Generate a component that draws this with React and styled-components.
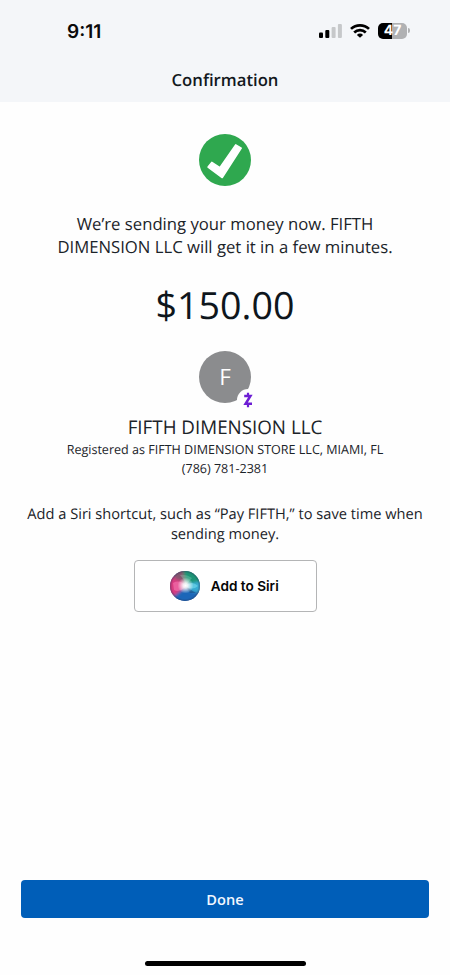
import React from 'react';
import styled, { createGlobalStyle } from 'styled-components';

const GlobalStyle = createGlobalStyle`
  * {
    box-sizing: border-box;
  }

  body {
    margin: 0;
    background: #fefefe;
    font-family: 'Open Sans', 'Noto Sans', sans-serif;
    color: #1b2329;
    text-rendering: geometricPrecision;
  }

  button {
    font-family: inherit;
    cursor: pointer;
  }
`;

const Screen = styled.div`
  width: 450px;
  height: 975px;
  display: flex;
  flex-direction: column;
  background: #fefefe;
  overflow: hidden;
`;

const Header = styled.header`
  height: 102px;
  flex-shrink: 0;
  background: #f4f6f9;
`;

const StatusBar = styled.div`
  height: 61px;
  padding: 0 39px 0 67px;
  display: flex;
  align-items: center;
  justify-content: space-between;
`;

const Time = styled.div`
  padding-top: 1px;
  font-family: Inter, sans-serif;
  font-size: 19px;
  font-weight: 600;
  color: #0a0a0a;
`;

const StatusIcons = styled.div`
  display: flex;
  align-items: center;
  gap: 8px;
`;

const Battery = styled.div`
  position: relative;
  width: 29px;
  height: 16px;
  margin-right: 4px;
  display: flex;
  align-items: center;
  justify-content: center;
  border-radius: 5px;
  background: linear-gradient(90deg, #000 48%, #b0b1b3 48%);
  color: #fff;
  font-family: Inter, sans-serif;
  font-size: 14px;
  font-weight: 700;
  line-height: 17px;

  &::after {
    content: '';
    position: absolute;
    right: -3px;
    top: 5.5px;
    width: 2px;
    height: 5px;
    border-radius: 0 2px 2px 0;
    background: #b0b1b3;
  }
`;

const Title = styled.h1`
  margin: 7px 0 0;
  text-align: center;
  font-size: 16.7px;
  font-weight: 600;
  line-height: 23px;
  color: #12181d;
`;

const Content = styled.main`
  flex: 1;
  display: flex;
  flex-direction: column;
  align-items: center;
  padding-top: 32px;
  text-align: center;
`;

const Message = styled.p`
  width: 360px;
  margin: 27px 0 0;
  font-size: 16.7px;
  line-height: 22.5px;
`;

const Amount = styled.div`
  margin-top: 21px;
  font-size: 37.6px;
  line-height: 54px;
  color: #0e161c;
`;

const Avatar = styled.div`
  position: relative;
  width: 52px;
  height: 52px;
  margin-top: 18px;
  display: flex;
  align-items: center;
  justify-content: center;
  border-radius: 50%;
  background: #8b8c8e;
  color: #fff;
  font-size: 22.5px;
  line-height: 52px;
`;

const Badge = styled.span`
  position: absolute;
  left: 38px;
  top: 38px;
  width: 22px;
  height: 22px;
  display: flex;
  align-items: center;
  justify-content: center;
  border-radius: 50%;
  background: #fefefe;
`;

const Recipient = styled.h2`
  margin: 11px 0 1px;
  font-size: 18.8px;
  font-weight: 400;
  line-height: 26px;
`;

const Detail = styled.div`
  font-size: 12.55px;
  line-height: 18.5px;
`;

const SiriHint = styled.p`
  width: 420px;
  margin: 26px 0 0;
  font-size: 14.63px;
  line-height: 20px;
`;

const SiriButton = styled.button`
  width: 183px;
  height: 52px;
  margin-top: 15.5px;
  padding: 0 1px 0 0;
  display: flex;
  align-items: center;
  justify-content: center;
  gap: 10.5px;
  border: 1px solid #b4b5b6;
  border-radius: 4px;
  background: #fff;
`;

const SiriLabel = styled.span`
  font-family: Inter, sans-serif;
  font-size: 13.6px;
  font-weight: 600;
  color: #050505;
`;

const Footer = styled.footer`
  padding: 0 21px;
  height: 95px;
  flex-shrink: 0;
  display: flex;
  flex-direction: column;
  align-items: center;
`;

const DoneButton = styled.button`
  width: 100%;
  height: 38px;
  padding: 0;
  border: none;
  border-radius: 4px;
  background: #005eb8;
  color: #f2f8ff;
  font-size: 14.6px;
  font-weight: 600;
`;

const HomeIndicator = styled.div`
  width: 161px;
  height: 5px;
  margin-top: 43px;
  border-radius: 3px;
  background: #000;
`;

function SignalIcon() {
  return (
    <svg width="23" height="16" viewBox="0 0 23 16">
      <rect x="0" y="9.5" width="4" height="5.5" rx="1" fill="#000" />
      <rect x="6.3" y="7" width="4" height="8" rx="1" fill="#000" />
      <rect x="12.6" y="4" width="4" height="11" rx="1" fill="#c6c8ca" />
      <rect x="18.9" y="1" width="4" height="14" rx="1" fill="#c6c8ca" />
    </svg>
  );
}

function WifiIcon() {
  return (
    <svg width="20" height="16" viewBox="0 0 20 16" fill="none" stroke="#000" strokeWidth="2.7">
      <path d="M1 5.9A13 13 0 0 1 19 5.9" />
      <path d="M4.2 9.5A8.4 8.4 0 0 1 15.8 9.5" />
      <path d="M10 14.8L6.9 11.9A4.4 4.4 0 0 1 13.1 11.9Z" fill="#000" stroke="none" />
    </svg>
  );
}

function CheckIcon() {
  return (
    <svg width="52" height="52" viewBox="0 0 52 52">
      <circle cx="26" cy="26" r="26" fill="#2fa84f" />
      <path
        d="M12.8 28.4L20.9 33.6L36.7 10.9L42.2 14.1L23.2 43.5L9.1 33.1Z"
        fill="#fff"
        stroke="#fff"
        strokeWidth="1.6"
        strokeLinejoin="round"
      />
    </svg>
  );
}

function ZelleIcon() {
  return (
    <svg width="10" height="16" viewBox="0 0 10 16" fill="none" stroke="#6d1ed4">
      <path d="M1.2 4H7.4L2.6 11.8H9" strokeWidth="2.5" />
      <path d="M5 0.8V4M5 12V15.2" strokeWidth="2.2" />
    </svg>
  );
}

function SiriIcon() {
  return (
    <svg width="30" height="30" viewBox="0 0 30 30">
      <defs>
        <clipPath id="orb">
          <circle cx="15" cy="15" r="15" />
        </clipPath>
        <radialGradient id="glow">
          <stop offset="0" stopColor="#fff" />
          <stop offset="0.3" stopColor="#fff" stopOpacity="0.85" />
          <stop offset="1" stopColor="#fff" stopOpacity="0" />
        </radialGradient>
        <radialGradient id="edge">
          <stop offset="0.85" stopColor="#24304f" stopOpacity="0" />
          <stop offset="1" stopColor="#24304f" stopOpacity="0.4" />
        </radialGradient>
        <filter id="soften" x="-50%" y="-50%" width="200%" height="200%">
          <feGaussianBlur stdDeviation="1.8" />
        </filter>
        <filter id="softenRay" x="-50%" y="-50%" width="200%" height="200%">
          <feGaussianBlur stdDeviation="0.7" />
        </filter>
      </defs>
      <g clipPath="url(#orb)">
        <rect width="30" height="30" fill="#4b5f94" />
        <g filter="url(#soften)">
          <path d="M8 -3H33V13L16 14Z" fill="#1b9474" />
          <path d="M-3 6L10 4L15 14L7 25L-3 24Z" fill="#d93a80" />
          <path d="M3 -2H13L15 11L5 8Z" fill="#85566f" />
          <path d="M4 25L14 17L29 20L24 33H5Z" fill="#1f66b8" />
          <path d="M17 13L31 10V22L20 20Z" fill="#38acd2" />
        </g>
        <g filter="url(#softenRay)">
          <path d="M3 12Q10 8 16 15Q10 22 4 19Z" fill="#ff8cc4" opacity="0.45" />
          <path d="M15 15Q22 9 28 15Q22 20 15 15Z" fill="#7be0f0" opacity="0.55" />
          <path d="M16 16L26 22L20 22Z" fill="#1b3f78" opacity="0.5" />
          <path d="M10 4Q14 8 16 14L22 7Q16 3 10 4Z" fill="#9adfc5" opacity="0.3" />
        </g>
        <circle cx="15.5" cy="14.5" r="8" fill="url(#glow)" />
        <circle cx="15" cy="15" r="15" fill="url(#edge)" />
      </g>
    </svg>
  );
}

function App() {
  return (
    <>
      <GlobalStyle />
      <Screen>
        <Header>
          <StatusBar>
            <Time>9:11</Time>
            <StatusIcons>
              <SignalIcon />
              <WifiIcon />
              <Battery>47</Battery>
            </StatusIcons>
          </StatusBar>
          <Title>Confirmation</Title>
        </Header>

        <Content>
          <CheckIcon />
          <Message>
            We’re sending your money now. FIFTH DIMENSION LLC will get it in a few minutes.
          </Message>
          <Amount>$150.00</Amount>
          <Avatar>
            F
            <Badge>
              <ZelleIcon />
            </Badge>
          </Avatar>
          <Recipient>FIFTH DIMENSION LLC</Recipient>
          <Detail>Registered as FIFTH DIMENSION STORE LLC, MIAMI, FL</Detail>
          <Detail>(786) 781-2381</Detail>
          <SiriHint>
            Add a Siri shortcut, such as “Pay FIFTH,” to save time when sending money.
          </SiriHint>
          <SiriButton>
            <SiriIcon />
            <SiriLabel>Add to Siri</SiriLabel>
          </SiriButton>
        </Content>

        <Footer>
          <DoneButton>Done</DoneButton>
          <HomeIndicator />
        </Footer>
      </Screen>
    </>
  );
}

export default App;
